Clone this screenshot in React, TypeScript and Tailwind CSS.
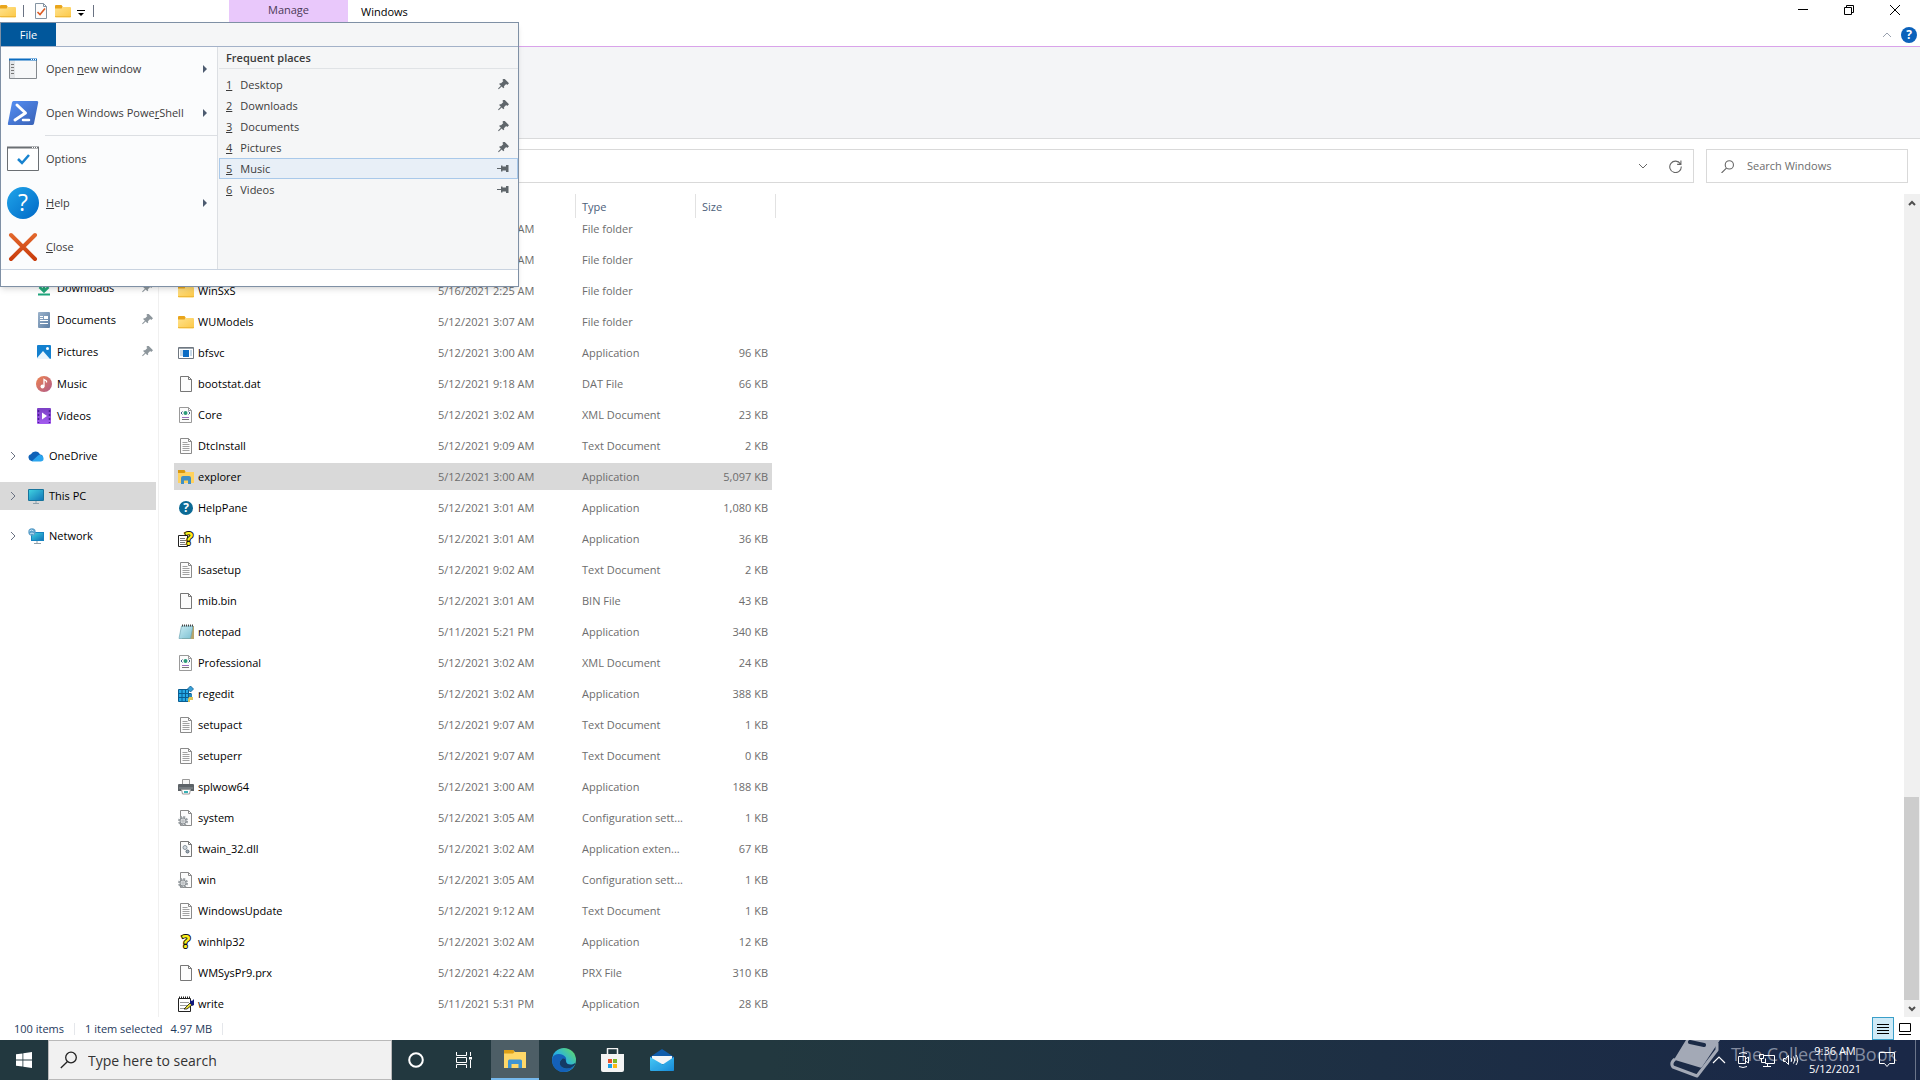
import type { ReactNode } from 'react';

type IconName =
  | 'folder' | 'app' | 'blank' | 'xml' | 'text' | 'explorer' | 'helppane' | 'hh' | 'notepad'
  | 'regedit' | 'printer' | 'config' | 'dll' | 'winhelp' | 'write' | 'downloads' | 'documents'
  | 'pictures' | 'music' | 'videos' | 'onedrive' | 'pc' | 'network' | 'checkdoc';

interface FileRow {
  name: string;
  icon: IconName;
  date: string;
  type: string;
  size?: string;
  selected?: boolean;
}

const files: FileRow[] = [
  { name: '', icon: 'folder', date: '5/12/2021 3:07 AM', type: 'File folder' },
  { name: '', icon: 'folder', date: '5/12/2021 3:07 AM', type: 'File folder' },
  { name: 'WinSxS', icon: 'folder', date: '5/16/2021 2:25 AM', type: 'File folder' },
  { name: 'WUModels', icon: 'folder', date: '5/12/2021 3:07 AM', type: 'File folder' },
  { name: 'bfsvc', icon: 'app', date: '5/12/2021 3:00 AM', type: 'Application', size: '96 KB' },
  { name: 'bootstat.dat', icon: 'blank', date: '5/12/2021 9:18 AM', type: 'DAT File', size: '66 KB' },
  { name: 'Core', icon: 'xml', date: '5/12/2021 3:02 AM', type: 'XML Document', size: '23 KB' },
  { name: 'DtcInstall', icon: 'text', date: '5/12/2021 9:09 AM', type: 'Text Document', size: '2 KB' },
  { name: 'explorer', icon: 'explorer', date: '5/12/2021 3:00 AM', type: 'Application', size: '5,097 KB', selected: true },
  { name: 'HelpPane', icon: 'helppane', date: '5/12/2021 3:01 AM', type: 'Application', size: '1,080 KB' },
  { name: 'hh', icon: 'hh', date: '5/12/2021 3:01 AM', type: 'Application', size: '36 KB' },
  { name: 'lsasetup', icon: 'text', date: '5/12/2021 9:02 AM', type: 'Text Document', size: '2 KB' },
  { name: 'mib.bin', icon: 'blank', date: '5/12/2021 3:01 AM', type: 'BIN File', size: '43 KB' },
  { name: 'notepad', icon: 'notepad', date: '5/11/2021 5:21 PM', type: 'Application', size: '340 KB' },
  { name: 'Professional', icon: 'xml', date: '5/12/2021 3:02 AM', type: 'XML Document', size: '24 KB' },
  { name: 'regedit', icon: 'regedit', date: '5/12/2021 3:02 AM', type: 'Application', size: '388 KB' },
  { name: 'setupact', icon: 'text', date: '5/12/2021 9:07 AM', type: 'Text Document', size: '1 KB' },
  { name: 'setuperr', icon: 'text', date: '5/12/2021 9:07 AM', type: 'Text Document', size: '0 KB' },
  { name: 'splwow64', icon: 'printer', date: '5/12/2021 3:00 AM', type: 'Application', size: '188 KB' },
  { name: 'system', icon: 'config', date: '5/12/2021 3:05 AM', type: 'Configuration sett...', size: '1 KB' },
  { name: 'twain_32.dll', icon: 'dll', date: '5/12/2021 3:02 AM', type: 'Application exten...', size: '67 KB' },
  { name: 'win', icon: 'config', date: '5/12/2021 3:05 AM', type: 'Configuration sett...', size: '1 KB' },
  { name: 'WindowsUpdate', icon: 'text', date: '5/12/2021 9:12 AM', type: 'Text Document', size: '1 KB' },
  { name: 'winhlp32', icon: 'winhelp', date: '5/12/2021 3:02 AM', type: 'Application', size: '12 KB' },
  { name: 'WMSysPr9.prx', icon: 'blank', date: '5/12/2021 4:22 AM', type: 'PRX File', size: '310 KB' },
  { name: 'write', icon: 'write', date: '5/11/2021 5:31 PM', type: 'Application', size: '28 KB' },
];

const quickAccess: { name: string; icon: IconName; pinned?: boolean }[] = [
  { name: 'Downloads', icon: 'downloads', pinned: true },
  { name: 'Documents', icon: 'documents', pinned: true },
  { name: 'Pictures', icon: 'pictures', pinned: true },
  { name: 'Music', icon: 'music' },
  { name: 'Videos', icon: 'videos' },
];

const roots: { name: string; icon: IconName; current?: boolean }[] = [
  { name: 'OneDrive', icon: 'onedrive' },
  { name: 'This PC', icon: 'pc', current: true },
  { name: 'Network', icon: 'network' },
];

const places = [
  { name: 'Desktop', pinned: true },
  { name: 'Downloads', pinned: true },
  { name: 'Documents', pinned: true },
  { name: 'Pictures', pinned: true },
  { name: 'Music', pinned: false, hover: true },
  { name: 'Videos', pinned: false },
];

// Shared page outline with a folded corner
function Page({ children, stroke = '#8a8a8a' }: { children?: ReactNode; stroke?: string }) {
  return (
    <>
      <path d="M2.5.5h8l3 3v12h-11z" fill="#fcfcfc" stroke={stroke} />
      <path d="M10.5.5v3h3" fill="none" stroke={stroke} />
      {children}
    </>
  );
}

function Question({ x, y, size, fill, outline }: { x: number; y: number; size: number; fill: string; outline?: string }) {
  return (
    <text
      x={x}
      y={y}
      fontSize={size}
      fontWeight="bold"
      textAnchor="middle"
      fill={fill}
      stroke={outline}
      strokeWidth={outline ? 2 : 0}
      paintOrder="stroke"
      fontFamily="Open Sans, sans-serif"
    >
      ?
    </text>
  );
}

const gear = (
  <>
    <circle cx="5" cy="11" r="4" fill="none" stroke="#9aa0a4" strokeWidth="2" strokeDasharray="2 1.1" />
    <circle cx="5" cy="11" r="3" fill="#d7dadc" stroke="#8d9296" />
    <circle cx="5" cy="11" r="1" fill="#fff" stroke="#8d9296" strokeWidth=".6" />
  </>
);

const drawings: Record<IconName, ReactNode> = {
  folder: (
    <>
      <path d="M0 3q0-1 1-1h5.5l1 1.5V6H0z" fill="#e9a51b" />
      <path d="M0 5.5h6.5L8 4h7q1 0 1 1v8.500q0 1-1 1H1q-1 0-1-1z" fill="url(#folderFill)" />
      <path d="M0 13.500h16" stroke="#efb93a" />
    </>
  ),
  app: (
    <>
      <path d="M.5 2.500h15v11H.5z" fill="#fff" stroke="#6f7780" />
      <path d="M1 3.500h14" stroke="#9aa3ab" />
      <path d="M2 6h3M2 8h3M2 10h3M12 6h2M12 8h2M12 10h2" stroke="#8fb4d3" />
      <path d="M5 5h6v7H5z" fill="#0b6cc4" />
    </>
  ),
  blank: <Page stroke="#777" />,
  xml: (
    <>
      <path d="M1.500.5h9l3 3v12h-12z" fill="#fcfcfc" stroke="#999" />
      <path d="M10.500.5v3h3" fill="none" stroke="#999" />
      <path d="M4.500 4.500 3 6l1.500 1.500M10.500 4.500 12 6l-1.500 1.500" fill="none" stroke="#3d5f8c" />
      <circle cx="7.500" cy="6" r="2" fill="#2b9a78" />
      <path d="M4 10.500h7" stroke="#9b6fc0" />
      <path d="M4 12.500h7" stroke="#777" />
    </>
  ),
  text: (
    <Page>
      <path d="M4.500 4.500h5M4.500 6.500h7M4.500 8.500h7M4.500 10.500h7M4.500 12.500h7" stroke="#a2a2a2" />
    </Page>
  ),
  explorer: (
    <>
      <path d="M0 1h6.500l1 2H16v11H0z" fill="#ffd25e" />
      <path d="M0 1h6.500l1 2-1 1H0z" fill="#d9990f" />
      <path d="M3 15V9q0-2 2-2h6q2 0 2 2v6h-3v-3.500H6V15z" fill="#3f8fc4" />
    </>
  ),
  helppane: (
    <>
      <circle cx="8" cy="8" r="7" fill="#0c6a95" />
      <Question x={8} y={12} size={12} fill="#fff" />
    </>
  ),
  hh: (
    <>
      <path d="M.5 4.500h9v11h-9z" fill="#fff" stroke="#222" />
      <path d="M2 7.500h5M2 9.500h6M2 11.500h5M2 13.500h6" stroke="#777" />
      <Question x={11} y={14} size={17} fill="#ffef1a" outline="#111" />
    </>
  ),
  notepad: (
    <>
      <path d="M4 2h12v13H4z" fill="#b6a56c" />
      <path d="M3.500 2h11.500L12.500 14.500H1z" fill="url(#padFill)" stroke="#6fa6b4" strokeWidth=".7" />
      <path d="M4 1.500h11" stroke="#444" strokeWidth="2" strokeDasharray="1 1" />
    </>
  ),
  regedit: (
    <>
      <path d="M.5 3.500h10v12h-10z" fill="#25a9e6" stroke="#0b5d91" />
      <path d="M.5 7.500h13M.5 11.500h13M4 3.500v12M7.500 3.500v12" stroke="#0b5d91" />
      <path d="M11 8h3v5h-3z" fill="#2487bd" />
      <path d="M12.500 0 15.500 3l-3 3-3-3z" fill="#3aa0d8" stroke="#0b5d91" strokeWidth=".8" />
      <path d="M11 11h4v3h-3v2h-2v-3z" fill="#dcc65b" />
    </>
  ),
  printer: (
    <>
      <path d="M4.500.5h7v5h-7z" fill="#f6f6f6" stroke="#999" />
      <path d="M0 6q0-1 1-1h14q1 0 1 1v6H0z" fill="#5c6267" />
      <path d="M1 9h14" stroke="#8d9499" />
      <path d="M3.500 10.500h9l-1 4.500h-7z" fill="#fff" stroke="#999" />
      <path d="M6 12h4v2H6z" fill="#39b1b5" />
    </>
  ),
  config: <Page>{gear}</Page>,
  dll: (
    <Page stroke="#777">
      <circle cx="7" cy="6.500" r="2" fill="#d5dbe0" stroke="#8a96a0" />
      <circle cx="9.500" cy="10.500" r="1.500" fill="#9eacb8" stroke="#5c6975" />
    </Page>
  ),
  winhelp: <Question x={8} y={14} size={18} fill="#ffef1a" outline="#111" />,
  write: (
    <>
      <path d="M.5 2.500h12v13H.5z" fill="#fff" stroke="#222" />
      <path d="M1 1.500h12" stroke="#222" strokeWidth="2" strokeDasharray="1 1" />
      <path d="M2 6.500h9M2 9.500h7M2 12.500h5" stroke="#999" />
      <path d="m6 13 6-6 2 2-5 4z" fill="#e6dc35" stroke="#111" strokeWidth=".8" />
      <path d="M12 7V4l2 1 2-2v6l-2 1z" fill="#111a7a" />
    </>
  ),
  downloads: (
    <>
      <path d="M8 1v10M3.500 7 8 11.500 12.500 7" fill="none" stroke="#22a678" strokeWidth="2.500" />
      <path d="M2 14.500h12" stroke="#1fa57c" strokeWidth="2" />
    </>
  ),
  documents: (
    <>
      <rect x="2" y="0" width="12" height="16" rx="1" fill="url(#docFill)" />
      <path d="M4 4.500h3M4 6.500h3M4 8.500h8M4 11.500h8" stroke="#fff" />
      <path d="M8 4h4v3H8z" fill="#fff" />
    </>
  ),
  pictures: (
    <>
      <rect x="1" y="1" width="14" height="14" rx="1" fill="#1380cf" />
      <path d="m1 14 6-7 7 8H1z" fill="#e9f5fd" />
      <circle cx="11.500" cy="4.500" r="1.500" fill="#fff" />
    </>
  ),
  music: (
    <>
      <circle cx="8" cy="8" r="8" fill="url(#musicFill)" />
      <circle cx="6.500" cy="10.500" r="2" fill="#fff" />
      <path d="M8 10.500v-7l2.500 1.500v1.500" fill="none" stroke="#fff" strokeWidth="1.300" />
    </>
  ),
  videos: (
    <>
      <rect x="1" y="0" width="14" height="16" rx="1" fill="url(#videoFill)" />
      <path d="M2.500 2v13M13.500 2v13" stroke="#4a1f94" strokeDasharray="2 2" strokeWidth="1.500" />
      <path d="m6 4.500 5 3.500-5 3.500z" fill="#fff" />
    </>
  ),
  onedrive: (
    <>
      <path d="M3.500 13a3.500 3.500 0 0 1-.6-6.800A5 5 0 0 1 12 6.500 3.300 3.300 0 0 1 12.500 13z" fill="#0f62b8" />
      <path d="M3.500 13.500 10 7.500a3.500 3.500 0 0 1 5.500 2.500 3 3 0 0 1-2.500 3.500z" fill="#2ba5ee" />
    </>
  ),
  pc: (
    <>
      <rect x="0" y="1" width="16" height="12" rx="1" fill="#18749c" />
      <path d="M1 2h14v10H1z" fill="url(#pcFill)" />
      <path d="M8 13v2M5 15.500h6" stroke="#8fa0ab" />
    </>
  ),
  network: (
    <>
      <path d="M3 4h13v9H3z" fill="#1784c0" />
      <path d="M4 5h11v7H4z" fill="url(#pcFill)" />
      <path d="M9 13v2M6 15.500h7" stroke="#8fa0ab" />
      <circle cx="4" cy="4" r="3.700" fill="#5b9fc9" />
      <path d="M1.500 3q2-2 4 0M2 6q2-2 4 0" stroke="#c7e4f4" fill="none" />
    </>
  ),
  checkdoc: (
    <Page stroke="#8494a2">
      <path d="m4.500 9 2.500 2.500 5-6" fill="none" stroke="#dd5a22" strokeWidth="1.600" />
    </Page>
  ),
};

function Icon({ name }: { name: IconName }) {
  return (
    <svg viewBox="0 0 16 16" className="size-4 shrink-0 overflow-visible" aria-hidden="true">
      {drawings[name]}
    </svg>
  );
}

// Gradients used by several icons
function IconDefs() {
  return (
    <svg className="absolute size-0" aria-hidden="true">
      <defs>
        <linearGradient id="folderFill" x1="0" y1="0" x2="1" y2="1">
          <stop offset="0" stopColor="#ffe28c" />
          <stop offset="1" stopColor="#fcc846" />
        </linearGradient>
        <linearGradient id="padFill" x1="0" y1="0" x2="1" y2="1">
          <stop offset="0" stopColor="#c9ecf3" />
          <stop offset="1" stopColor="#7cc0d2" />
        </linearGradient>
        <linearGradient id="docFill" x1="0" y1="0" x2="1" y2="1">
          <stop offset="0" stopColor="#9db4cc" />
          <stop offset="1" stopColor="#5b7da3" />
        </linearGradient>
        <linearGradient id="musicFill" x1="0" y1="0" x2="1" y2="1">
          <stop offset="0" stopColor="#ee8450" />
          <stop offset="1" stopColor="#b05a8a" />
        </linearGradient>
        <linearGradient id="videoFill" x1="0" y1="0" x2="0" y2="1">
          <stop offset="0" stopColor="#7b3fc4" />
          <stop offset="1" stopColor="#a45cf0" />
        </linearGradient>
        <linearGradient id="pcFill" x1="0" y1="0" x2="1" y2="1">
          <stop offset="0" stopColor="#3fd0e0" />
          <stop offset="1" stopColor="#1276b8" />
        </linearGradient>
        <linearGradient id="psFill" x1="0" y1="0" x2="1" y2="1">
          <stop offset="0" stopColor="#5590f5" />
          <stop offset="1" stopColor="#3860b4" />
        </linearGradient>
        <linearGradient id="helpFill" x1="0" y1="0" x2="1" y2="1">
          <stop offset="0" stopColor="#20a5ea" />
          <stop offset="1" stopColor="#0068c6" />
        </linearGradient>
        <linearGradient id="closeFill" x1="0" y1="0" x2="0" y2="1">
          <stop offset="0" stopColor="#e2672c" />
          <stop offset="1" stopColor="#c93c0c" />
        </linearGradient>
        <linearGradient id="edgeFill" x1="0" y1="1" x2="1" y2="0">
          <stop offset="0" stopColor="#1173cf" />
          <stop offset=".5" stopColor="#2bb3dd" />
          <stop offset="1" stopColor="#67df58" />
        </linearGradient>
        <linearGradient id="mailFill" x1="0" y1="0" x2="1" y2="1">
          <stop offset="0" stopColor="#46c8f5" />
          <stop offset="1" stopColor="#168ad8" />
        </linearGradient>
      </defs>
    </svg>
  );
}

function Pin({ pinned, className }: { pinned?: boolean; className: string }) {
  return (
    <svg viewBox="0 0 12 12" className={className} fill="currentColor" aria-hidden="true">
      <path
        transform={pinned ? 'rotate(-45 6 6)' : undefined}
        d="M0 5h4V2.500h1.500v1H9V2h2.500v7H9V7.500H5.500v1H4V6H0z"
      />
    </svg>
  );
}

function Chevron({ className, d }: { className: string; d: string }) {
  return (
    <svg viewBox="0 0 12 12" className={className} fill="none" stroke="currentColor" aria-hidden="true">
      <path d={d} />
    </svg>
  );
}

function TitleBar() {
  return (
    <div className="flex h-[23px] shrink-0 items-start">
      <div className="flex h-[22px] w-[229px] items-center">
        <Icon name="folder" />
        <span className="ml-[7px] h-3 w-px bg-gray-500" />
        <button type="button" aria-label="Properties" className="ml-[9px]"><Icon name="checkdoc" /></button>
        <button type="button" aria-label="New folder" className="ml-[6px]"><Icon name="folder" /></button>
        <button type="button" aria-label="Customize toolbar" className="ml-[6px] pt-[3px]">
          <svg viewBox="0 0 8 6" className="h-[6px] w-2"><path d="M0 .5h8" stroke="#000" /><path d="M1 3h6L4 6z" /></svg>
        </button>
        <span className="ml-[8px] h-3 w-px bg-gray-500" />
      </div>
      <div className="h-full w-[119px] bg-[#e9c8fb] text-center leading-5 text-[#4b3a56]">Manage</div>
      <div className="ml-[13px] leading-6 text-black">Windows</div>
      <div className="ml-auto flex pr-[2px]">
        {[
          ['Minimize', 'M1 5.500h10'],
          ['Restore', 'M1.500 3.500h7v7h-7zM3.500 3V1.500h7v7H9'],
          ['Close', 'm1 1 10 10M11 1 1 11'],
        ].map(([label, d]) => (
          <button key={label} type="button" aria-label={label} className="flex h-5 w-[46px] items-center justify-center text-black">
            <Chevron className="size-3" d={d} />
          </button>
        ))}
      </div>
    </div>
  );
}

function Ribbon() {
  return (
    <>
      <div className="flex h-6 shrink-0 items-center justify-end gap-2 border-b border-[#d9a3ea] pr-[3px] text-gray-400">
        <button type="button" aria-label="Collapse ribbon"><Chevron className="size-3" d="m2 8 4-4 4 4" /></button>
        <button type="button" aria-label="Help">
          <svg viewBox="0 0 16 16" className="size-4">
            <circle cx="8" cy="8" r="8" fill="#0b62bb" />
            <Question x={8} y={12} size={12} fill="#fff" />
          </svg>
        </button>
      </div>
      <div className="h-[92px] shrink-0 border-b border-[#d9dadb] bg-[#f4f5f7]" />
    </>
  );
}

function AddressRow() {
  return (
    <div className="flex h-[51px] shrink-0 items-start gap-3 pt-[10px] pr-[12px] text-[#666]">
      <div className="flex h-[34px] flex-1 items-center justify-end gap-5 border border-[#d9d9d9] pr-[11px]">
        <button type="button" aria-label="Previous locations"><Chevron className="size-3" d="m2 4 4 4 4-4" /></button>
        <button type="button" aria-label="Refresh">
          <Chevron className="size-[13px]" d="M10.500 3.500A5.300 5.300 0 1 0 11.300 6M11 .5v3.500H7.500" />
        </button>
      </div>
      <label className="flex h-[34px] w-[202px] items-center border border-[#d9d9d9] pl-[14px]">
        <Chevron className="size-[13px]" d="M11.500 4.500a3.800 3.800 0 1 1-7.600 0 3.800 3.800 0 0 1 7.600 0M5 7.500.5 12" />
        <input
          type="text"
          aria-label="Search Windows"
          placeholder="Search Windows"
          className="ml-[13px] w-36 bg-transparent outline-none placeholder:text-[#6d6d6d]"
        />
      </label>
    </div>
  );
}

function Sidebar() {
  return (
    <nav className="w-[159px] shrink-0 border-r border-[#f0f0f0] pt-[82px] text-black">
      {quickAccess.map((q) => (
        <a key={q.name} href="#" className="flex h-8 items-center pr-[5px] pl-9">
          <Icon name={q.icon} />
          <span className="ml-[5px]">{q.name}</span>
          {q.pinned && <Pin pinned className="ml-auto size-3 text-[#8d969c]" />}
        </a>
      ))}
      <div className="mt-[10px] flex flex-col gap-3 pr-[2px]">
        {roots.map((r) => (
          <a key={r.name} href="#" className={`flex h-7 items-center pl-[7px] ${r.current ? 'bg-[#d9d9d9]' : ''}`}>
            <Chevron className="size-3 text-gray-500" d="m4 2 4 4-4 4" />
            <span className="ml-[9px] flex items-center gap-[5px]">
              <Icon name={r.icon} />
              {r.name}
            </span>
          </a>
        ))}
      </div>
    </nav>
  );
}

function HeaderCell({ width, inner, children }: { width: string; inner: string; children: ReactNode }) {
  // The separators reach slightly over the first row
  return (
    <th className={`p-0 font-normal ${width}`}>
      <div className={`relative -mb-[7px] flex h-6 items-center border-r border-[#e2e2e2] pt-px ${inner}`}>{children}</div>
    </th>
  );
}

function FileTable() {
  return (
    <div className="min-h-0 flex-1 overflow-hidden pl-[15px]">
      <table className="table-fixed border-separate border-spacing-x-0 border-spacing-y-1">
        <thead>
          <tr className="text-left text-[#4c607a]">
            <HeaderCell width="w-[254px]" inner="pl-6">Name</HeaderCell>
            <HeaderCell width="w-[148px]" inner="pl-[10px]">Date modified</HeaderCell>
            <HeaderCell width="w-[120px]" inner="pl-[6px]">Type</HeaderCell>
            <HeaderCell width="w-[76px]" inner="-mr-1 pl-[6px]">Size</HeaderCell>
          </tr>
        </thead>
        <tbody className="text-[#6d6d6d]">
          {files.map((f, i) => (
            <tr key={i} className={f.selected ? 'bg-[#d9d9d9]' : ''}>
              <td className="h-[27px] p-0 pl-1 text-black">
                <span className="flex items-center gap-1">
                  <Icon name={f.icon} />
                  {f.name}
                </span>
              </td>
              <td className="p-0 pl-[10px]">{f.date}</td>
              <td className="p-0 pl-[6px] whitespace-nowrap">{f.type}</td>
              <td className="p-0 pr-1 text-right">{f.size}</td>
            </tr>
          ))}
        </tbody>
      </table>
    </div>
  );
}

function Scrollbar() {
  return (
    <div className="mt-1 flex w-4 flex-col bg-[#f0f0f0] text-[#505050]">
      <button type="button" aria-label="Scroll up" className="flex h-[17px] items-center justify-center">
        <Chevron className="size-3 stroke-2" d="m3 8 3-3 3 3" />
      </button>
      <div className="grow-[585]" />
      <div className="mr-px grow-[203] bg-[#cdcdcd]" />
      <button type="button" aria-label="Scroll down" className="flex h-[17px] items-center justify-center">
        <Chevron className="size-3 stroke-2" d="m3 4 3 3 3-3" />
      </button>
    </div>
  );
}

function StatusBar() {
  return (
    <footer className="flex h-[23px] shrink-0 items-center pl-[14px] text-[#1e395b]">
      <span>100 items</span>
      <span className="mx-[10px] h-3 w-px bg-gray-200" />
      <span>1 item selected</span>
      <span className="ml-2">4.97 MB</span>
      <span className="ml-[10px] h-3 w-px bg-gray-200" />
      <div className="ml-auto flex h-full items-center pr-[6px]">
        <button type="button" aria-label="Details view" className="flex h-full w-[22px] items-center justify-center border border-[#3a9fc9] bg-[#cfeaf7]">
          <svg viewBox="0 0 12 12" className="size-3" stroke="#000"><path d="M0 1.500h12M0 4.500h12M0 7.500h12M0 10.500h12" /></svg>
        </button>
        <button type="button" aria-label="Large icons view" className="ml-[2px] flex h-full w-[18px] items-center justify-center">
          <svg viewBox="0 0 12 12" className="size-3" fill="none" stroke="#000"><path d="M.5.5h11v8H.5zM0 11.500h12" /></svg>
        </button>
      </div>
    </footer>
  );
}

const bigIcons = {
  window: (
    <>
      <path d="M2.500 6.500h27v19h-27z" fill="#f7f8f9" stroke="#84898e" />
      <path d="M3 7h5v18H3z" fill="#e4e6e8" />
      <path d="M2 6.500h28" stroke="#0b6cc0" strokeWidth="2" />
      <path d="M4 11.500h3M4 14.500h3M4 17.500h3M4 20.500h3" stroke="#777" />
      <path d="M24 6.500h5" stroke="#fff" strokeDasharray="1 1" />
    </>
  ),
  powershell: (
    <>
      <path d="M6.500 4H30q1.500 0 1.200 1.500L27 26.500q-.4 1.500-2 1.500H2Q.5 28 .9 26.500L5 5.500Q5.300 4 6.500 4z" fill="url(#psFill)" />
      <path d="m10 8 8.500 8L8 23" fill="none" stroke="#fff" strokeWidth="3" strokeLinecap="round" strokeLinejoin="round" />
      <path d="M16 23h6" stroke="#fff" strokeWidth="2.500" strokeLinecap="round" />
    </>
  ),
  options: (
    <>
      <path d="M.5 4.500h31v23H.5z" fill="#fff" stroke="#6b6f73" />
      <path d="M0 4.500h32" stroke="#6b6f73" strokeWidth="2" />
      <path d="M25 4.500h6" stroke="#fff" strokeDasharray="1 1" />
      <path d="m11 16 4 4 7-8" fill="none" stroke="#1883cf" strokeWidth="2.500" />
    </>
  ),
  help: (
    <>
      <circle cx="16" cy="16" r="16" fill="url(#helpFill)" />
      <text x="16" y="24" fontSize="23" textAnchor="middle" fill="#fff" fontFamily="Open Sans, sans-serif">?</text>
    </>
  ),
  close: <path d="m4 4 24 24M28 4 4 28" stroke="url(#closeFill)" strokeWidth="4" strokeLinecap="round" />,
};

function MenuItem({ icon, arrow, children }: { icon: keyof typeof bigIcons; arrow?: boolean; children: ReactNode }) {
  return (
    <button type="button" className="flex h-11 w-full items-center pl-[6px] text-left">
      <svg viewBox="0 0 32 32" className="size-8 shrink-0" aria-hidden="true">{bigIcons[icon]}</svg>
      <span className="ml-[7px]">{children}</span>
      {arrow && (
        <svg viewBox="0 0 4 8" className="mr-[10px] ml-auto h-2 w-1" fill="#4d5b70"><path d="M0 0v8l4-4z" /></svg>
      )}
    </button>
  );
}

// The opened File menu, floating over the window
function FileMenu() {
  return (
    <div className="absolute top-[22px] left-0 z-10 w-[519px] border border-[#7f90a5] bg-white text-[#3b3b3b] shadow-md">
      <div className="h-6 border-b border-[#a3b1c8] bg-[#f5f6f7]">
        <button type="button" className="h-[23px] w-[55px] bg-[#01579b] text-white">File</button>
      </div>
      <div className="flex border-b border-[#c9d3e0]">
        <div className="w-[217px] border-r border-[#dcdfe3] bg-[#fbfcfd]">
          <MenuItem icon="window" arrow>Open <u>n</u>ew window</MenuItem>
          <MenuItem icon="powershell" arrow>Open Windows Powe<u>r</u>Shell</MenuItem>
          <div className="ml-11 h-[2px] border-t border-[#dcdfe3]" />
          <MenuItem icon="options">Options</MenuItem>
          <MenuItem icon="help" arrow><u>H</u>elp</MenuItem>
          <MenuItem icon="close"><u>C</u>lose</MenuItem>
        </div>
        <div className="flex-1 bg-[#f5f6f7] pl-px">
          <h2 className="mb-[5px] h-[22px] border-b border-[#e0e3e6] pl-[7px] leading-[22px] font-semibold">Frequent places</h2>
          {places.map((p, i) => (
            <button
              key={p.name}
              type="button"
              className={`flex h-[21px] w-full items-center border pr-2 pl-[6px] ${p.hover ? 'border-[#a9c9ea] bg-[#e8eff7]' : 'border-transparent'}`}
            >
              <u>{i + 1}</u>
              <span className="ml-2">{p.name}</span>
              <Pin pinned={p.pinned} className="ml-auto size-3 text-[#5f666b]" />
            </button>
          ))}
        </div>
      </div>
      <div className="h-4" />
    </div>
  );
}

function TrayIcon({ label, children }: { label: string; children: ReactNode }) {
  return (
    <button type="button" aria-label={label} className="flex w-6 items-center justify-center">
      <svg viewBox="0 0 16 16" className="size-4" fill="none" stroke="#fff">{children}</svg>
    </button>
  );
}

function Taskbar() {
  return (
    <div className="relative flex h-10 shrink-0 bg-linear-to-r from-[#22383f] from-40% to-[#1a2847] to-95%">
      <button type="button" aria-label="Start" className="flex w-12 items-center justify-center">
        <svg viewBox="0 0 16 16" className="size-4" fill="#fff">
          <path d="M0 2.300 6.500 1.400v6.200H0zM7.300 1.300 16 0v7.600H7.300zM0 8.400h6.500v6.200L0 13.700zM7.300 8.400H16V16l-8.700-1.300z" />
        </svg>
      </button>
      <label className="flex w-[344px] items-center border border-[#b9b9b9] bg-[#f1f1f1] pl-[11px] text-[#333]">
        <svg viewBox="0 0 18 18" className="size-[18px]" fill="none" stroke="#222" strokeWidth="1.300">
          <circle cx="11" cy="6.500" r="5.300" />
          <path d="M7.500 10.500.8 17" />
        </svg>
        <input
          type="text"
          aria-label="Type here to search"
          placeholder="Type here to search"
          className="ml-[10px] w-72 bg-transparent pt-[2px] text-sm outline-none placeholder:text-[#333]"
        />
      </label>
      <div className="flex">
        <button type="button" aria-label="Cortana" className="flex w-12 items-center justify-center">
          <svg viewBox="0 0 16 16" className="size-4" fill="none" stroke="#fff" strokeWidth="2"><circle cx="8" cy="8" r="6.800" /></svg>
        </button>
        <button type="button" aria-label="Task view" className="flex w-[51px] items-center justify-center pr-[3px]">
          <svg viewBox="0 0 16 16" className="size-4" fill="none" stroke="#fff">
            <path d="M.5 0v3.500h10V0M.5 16v-3.500h10V16M.5 5.500h10v5H.5zM14.500 0v4M14.500 8v8" />
            <path d="M13 5h3v2.500h-3z" fill="#fff" stroke="none" />
          </svg>
        </button>
        <button type="button" aria-label="File Explorer" className="flex w-12 items-center justify-center border-b-2 border-[#76b9ed] bg-[#4d5e66]">
          <svg viewBox="0 0 22 18" className="h-[18px] w-[22px]">
            <path d="M0 0h9l2 2h11v16H0z" fill="#ffd768" />
            <path d="M0 0h9l1.500 2L9 3.500H0z" fill="#dfa017" />
            <path d="M4 18v-7q0-1.500 1.500-1.500h11q1.500 0 1.500 1.500v7h-3.500v-4h-7v4z" fill="#3e94d3" />
          </svg>
        </button>
        <button type="button" aria-label="Edge" className="flex w-[49px] items-center justify-center">
          <svg viewBox="0 0 24 24" className="size-6">
            <circle cx="12" cy="12" r="12" fill="url(#edgeFill)" />
            <path d="M.3 10C2 6 7 5 11 7q4 2 3 6-2-3-4.500-1.500C6 14 8 20 14 20.500q4 0 8-2.500c-4 6-11 7.500-16 4.500C2 20-.5 16 .3 10z" fill="#1460b8" />
            <path d="M9.500 11.500C11 9.500 14 11 14 13c0 4 6 4.500 9 2q1 1-1 3-4 2.800-8 2.500c-6-.5-8-6-4.500-9z" fill="#143a66" />
          </svg>
        </button>
        <button type="button" aria-label="Store" className="flex w-[49px] items-center justify-center">
          <svg viewBox="0 0 24 24" className="size-6">
            <path d="M6.500 8V.8q0-.3.5-.3h9q.5 0 .5.500V8" fill="none" stroke="#f2f2f2" strokeWidth="1.500" />
            <path d="M0 6h23v16q0 2-2 2H2q-2 0-2-2z" fill="#f4f4f4" />
            <path d="M7 11h4v4H7z" fill="#e8502b" /><path d="M12 11h4v4h-4z" fill="#7cb928" />
            <path d="M7 16h4v4H7z" fill="#1ba1e8" /><path d="M12 16h4v4h-4z" fill="#fcb813" />
          </svg>
        </button>
        <button type="button" aria-label="Mail" className="flex w-[49px] items-center justify-center">
          <svg viewBox="0 0 24 22" className="h-[22px] w-6">
            <path d="M0 8 12 0l12 8v5H0z" fill="#0f5cab" />
            <path d="M2 7h20v8H2z" fill="#f3f6f8" />
            <path d="M0 8l24 14H1q-1 0-1-1z" fill="url(#mailFill)" />
            <path d="M24 8v13q0 1-1 1H3z" fill="url(#mailFill)" />
          </svg>
        </button>
      </div>

      {/* Faded book mark lying under the tray icons */}
      <div className="pointer-events-none absolute inset-y-0 right-6 flex w-[228px] text-[#838ca0]" aria-hidden="true">
        <svg viewBox="0 0 54 40" className="h-10 w-[54px] shrink-0">
          <path d="M18 0h34L34 27q-1 1-2 .5L7 20q-1-.5 0-2z" fill="#a3a9b6" />
          <path d="M7 19q-5 4-2 8l24 9L49 10V3" fill="none" stroke="#a3a9b6" strokeWidth="3" strokeLinejoin="round" />
          <path d="M22 2l14 3" stroke="#1b2b46" strokeWidth="4" strokeLinecap="round" />
        </svg>
        <span className="ml-[9px] text-lg leading-[29px] whitespace-nowrap">The Collection Book</span>
      </div>

      <div className="relative ml-auto flex text-white">
        <TrayIcon label="Show hidden icons"><path d="m2 11 6-6 6 6" strokeWidth="1.200" /></TrayIcon>
        <TrayIcon label="Meet now">
          <path d="M3.500 4.500h7v7h-7zM10.500 7l3-2v6l-3-2M4 1.500q4-2 8 0M4 14.500q4 2 8 0" />
        </TrayIcon>
        <TrayIcon label="Network">
          <path d="M4.500 3.500h11v8h-9v-5M4 14.500h8M8.500 12v2.500M.5 2.500h4v4h-4zM2.500 6.500v4h4" />
        </TrayIcon>
        <TrayIcon label="Volume">
          <path d="M.5 6.500h2l3-3v9l-3-3h-2zM8 6q1.500 2 0 4M10.500 4.500q2.500 3.500 0 7M13 3q3.500 5 0 10" />
        </TrayIcon>
        <button type="button" className="w-16 text-center leading-[18px]">
          <span className="block">9:36 AM</span>
          <span className="block">5/12/2021</span>
        </button>
        <button type="button" aria-label="Notifications" className="flex w-10 items-center justify-center">
          <svg viewBox="0 0 18 16" className="h-4 w-[18px]" fill="none" stroke="#fff"><path d="M1.500.5h15v11h-5l-2.500 3-2.500-3h-5z" /></svg>
        </button>
        <button type="button" aria-label="Show desktop" className="ml-2 w-[5px] border-l border-[#6b758a]" />
      </div>
    </div>
  );
}

export default function App() {
  return (
    <div className="relative flex h-screen flex-col overflow-hidden bg-white font-['Open_Sans','Noto_Sans',sans-serif] text-[11px] leading-4">
      <IconDefs />
      <TitleBar />
      <Ribbon />
      <AddressRow />
      <main className="flex min-h-0 flex-1">
        <Sidebar />
        <FileTable />
        <Scrollbar />
      </main>
      <StatusBar />
      <Taskbar />
      <FileMenu />
    </div>
  );
}
